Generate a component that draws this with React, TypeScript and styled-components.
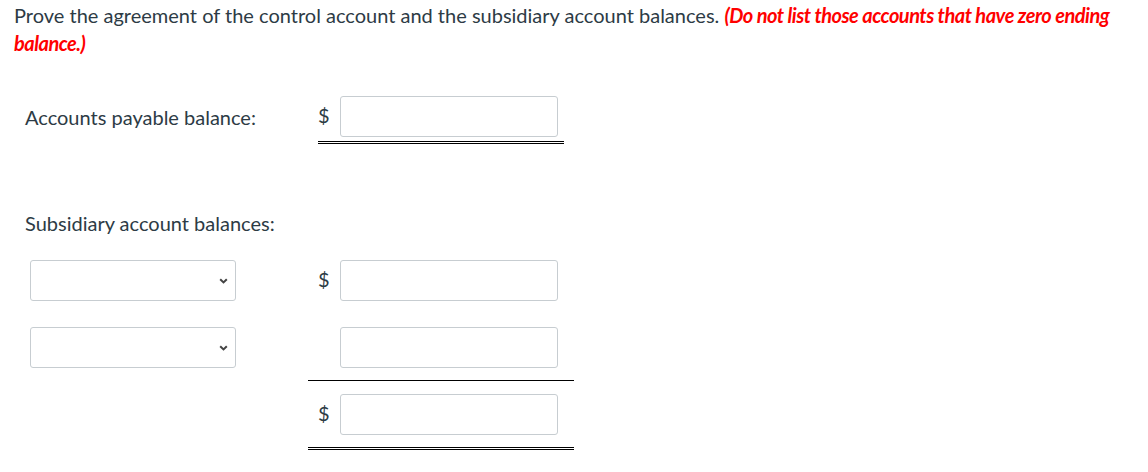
import React from 'react';
import styled, { createGlobalStyle } from 'styled-components';

const GlobalStyle = createGlobalStyle`
  html, body {
    margin: 0;
    padding: 0;
    background: #ffffff;
  }
  body {
    font-family: Lato, "Open Sans", "Liberation Sans", sans-serif;
    color: #2d3b45;
  }
`;

const Page = styled.div`
  width: 1148px;
  min-height: 472px;
`;

const Instructions = styled.p`
  margin: 0;
  padding: 1px 14px 0;
  font-size: 20px;
  line-height: 28px;
`;

const Warning = styled.strong`
  color: #ff0000;
  font-style: italic;
  font-weight: 700;
  letter-spacing: -0.5px;
`;

const Form = styled.div`
  padding-left: 25px;
  padding-top: 39px;
`;

const Row = styled.div<{ $top: number }>`
  display: grid;
  grid-template-columns: 283px 266px;
  align-items: start;
  margin-top: ${p => p.$top}px;
`;

const Label = styled.div`
  font-size: 20px;
  line-height: 28px;
  padding-top: 7px;
`;

type Rule = 'none' | 'single' | 'double';

const AmountCell = styled.div<{ $rule: Rule; $narrow?: boolean; $pad?: number }>`
  display: flex;
  align-items: center;
  gap: 10px;
  margin: ${p => (p.$narrow ? '0 10px' : '0')};
  padding: ${p => (p.$narrow ? `0 6px ${p.$pad ?? 4}px 0` : `0 16px ${p.$pad ?? 12}px 10px`)};
  border-bottom: ${p =>
    p.$rule === 'double' ? '3px double #000' : p.$rule === 'single' ? '1px solid #000' : 'none'};
`;

const Dollar = styled.span<{ $hidden?: boolean }>`
  width: 12px;
  font-size: 20px;
  line-height: 28px;
  margin-bottom: 3px;
  visibility: ${p => (p.$hidden ? 'hidden' : 'visible')};
`;

const AmountInput = styled.input`
  box-sizing: border-box;
  width: 218px;
  height: 41px;
  border: 1px solid #c7cdd1;
  border-radius: 3px;
  background: #fff;
  font-family: inherit;
  font-size: 16px;
  padding: 0 8px;
`;

const SelectWrap = styled.div`
  position: relative;
  width: 206px;
  height: 41px;
  margin-left: 5px;
`;

const AccountSelect = styled.select`
  box-sizing: border-box;
  width: 100%;
  height: 100%;
  border: 1px solid #c7cdd1;
  border-radius: 3px;
  background: #fff;
  appearance: none;
  -webkit-appearance: none;
  font-family: inherit;
  font-size: 16px;
`;

const Chevron = styled.svg`
  position: absolute;
  right: 8px;
  top: 18px;
  pointer-events: none;
`;

const SubSelect = () => (
  <SelectWrap>
    <AccountSelect defaultValue="">
      <option value=""></option>
    </AccountSelect>
    <Chevron width="9" height="6" viewBox="0 0 9 6">
      <path d="M1.2 1.2 L4.5 4.4 L7.8 1.2" fill="none" stroke="#444" strokeWidth="2" />
    </Chevron>
  </SelectWrap>
);

export default function App() {
  return (
    <Page>
      <GlobalStyle />
      <Instructions>
        Prove the agreement of the control account and the subsidiary account balances.{' '}
        <Warning>(Do not list those accounts that have zero ending balance.)</Warning>
      </Instructions>
      <Form>
        <Row $top={0}>
          <Label>Accounts payable balance:</Label>
          <AmountCell $rule="double" $narrow>
            <Dollar>$</Dollar>
            <AmountInput type="text" />
          </AmountCell>
        </Row>
        <Row $top={58}>
          <Label>Subsidiary account balances:</Label>
        </Row>
        <Row $top={23}>
          <SubSelect />
          <AmountCell $rule="none" $pad={0}>
            <Dollar>$</Dollar>
            <AmountInput type="text" />
          </AmountCell>
        </Row>
        <Row $top={26}>
          <SubSelect />
          <AmountCell $rule="single">
            <Dollar $hidden>$</Dollar>
            <AmountInput type="text" />
          </AmountCell>
        </Row>
        <Row $top={13}>
          <div />
          <AmountCell $rule="double" $pad={12}>
            <Dollar>$</Dollar>
            <AmountInput type="text" />
          </AmountCell>
        </Row>
      </Form>
    </Page>
  );
}
